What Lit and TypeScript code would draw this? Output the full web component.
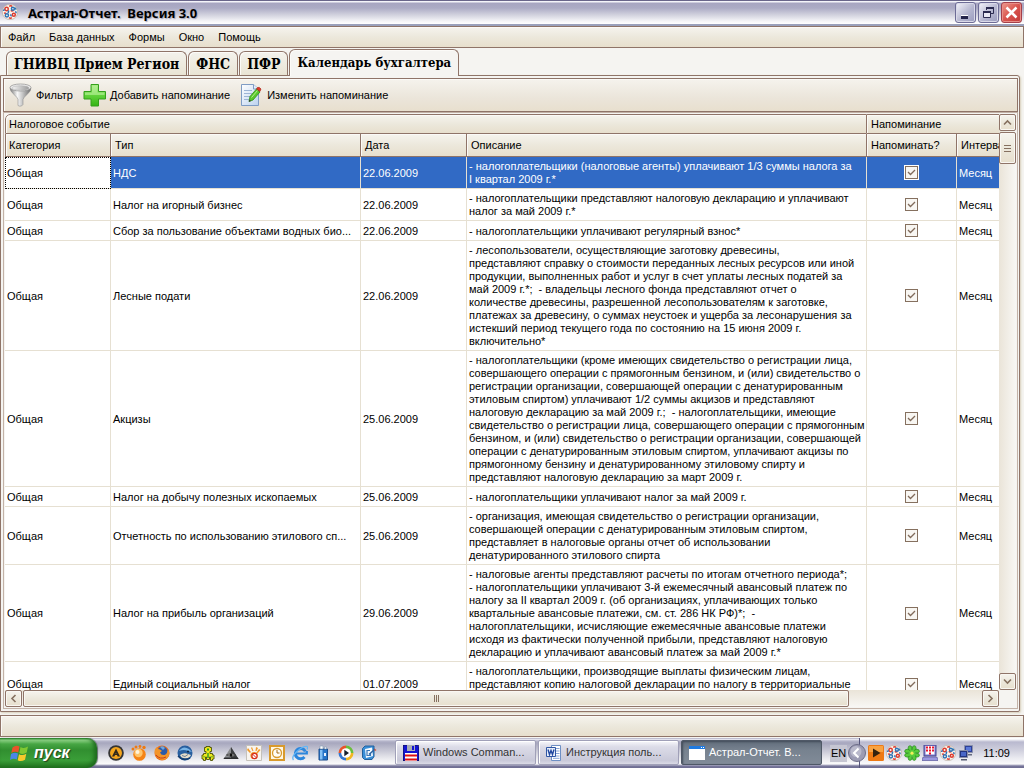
import { LitElement, html, css, svg, nothing } from "lit";
import { customElement, state } from "lit/decorators.js";
import { classMap } from "lit/directives/class-map.js";

interface TaxEvent {
  category: string;
  type: string;
  date: string;
  text: string;
  remind: boolean;
  interval: string;
}

const event = (type: string, date: string, ...lines: string[]): TaxEvent => ({
  category: "Общая", type, date, text: lines.join("\n"), remind: true, interval: "Месяц",
});

const EVENTS: TaxEvent[] = [
  event("НДС", "22.06.2009",
    "- налогоплательщики (налоговые агенты) уплачивают 1/3 суммы налога за",
    "I квартал 2009 г.*"),
  event("Налог на игорный бизнес", "22.06.2009",
    "- налогоплательщики представляют налоговую декларацию и уплачивают",
    "налог за май 2009 г.*"),
  event("Сбор за пользование объектами водных био...", "22.06.2009",
    "- налогоплательщики уплачивают регулярный взнос*"),
  event("Лесные подати", "22.06.2009",
    "- лесопользователи, осуществляющие заготовку древесины,",
    "представляют справку о стоимости переданных лесных ресурсов или иной",
    "продукции, выполненных работ и услуг в счет уплаты лесных податей за",
    "май 2009 г.*;  - владельцы лесного фонда представляют отчет о",
    "количестве древесины, разрешенной лесопользователям к заготовке,",
    "платежах за древесину, о суммах неустоек и ущерба за лесонарушения за",
    "истекший период текущего года по состоянию на 15 июня 2009 г.",
    "включительно*"),
  event("Акцизы", "25.06.2009",
    "- налогоплательщики (кроме имеющих свидетельство о регистрации лица,",
    "совершающего операции с прямогонным бензином, и (или) свидетельство о",
    "регистрации организации, совершающей операции с денатурированным",
    "этиловым спиртом) уплачивают 1/2 суммы акцизов и представляют",
    "налоговую декларацию за май 2009 г.;  - налогоплательщики, имеющие",
    "свидетельство о регистрации лица, совершающего операции с прямогонным",
    "бензином, и (или) свидетельство о регистрации организации, совершающей",
    "операции с денатурированным этиловым спиртом, уплачивают акцизы по",
    "прямогонному бензину и денатурированному этиловому спирту и",
    "представляют налоговую декларацию за март 2009 г."),
  event("Налог на добычу полезных ископаемых", "25.06.2009",
    "- налогоплательщики уплачивают налог за май 2009 г."),
  event("Отчетность по использованию этилового сп...", "25.06.2009",
    "- организация, имеющая свидетельство о регистрации организации,",
    "совершающей операции с денатурированным этиловым спиртом,",
    "представляет в налоговые органы отчет об использовании",
    "денатурированного этилового спирта"),
  event("Налог на прибыль организаций", "29.06.2009",
    "- налоговые агенты представляют расчеты по итогам отчетного периода*;",
    "- налогоплательщики уплачивают 3-й ежемесячный авансовый платеж по",
    "налогу за II квартал 2009 г. (об организациях, уплачивающих только",
    "квартальные авансовые платежи, см. ст. 286 НК РФ)*;  -",
    "налогоплательщики, исчисляющие ежемесячные авансовые платежи",
    "исходя из фактически полученной прибыли, представляют налоговую",
    "декларацию и уплачивают авансовый платеж за май 2009 г.*"),
  event("Единый социальный налог", "01.07.2009",
    "- налогоплательщики, производящие выплаты физическим лицам,",
    "представляют копию налоговой декларации по налогу в территориальные",
    "\u00a0"),
];

const icon = (size: number, body: unknown) =>
  html`<svg class="icon" width=${size} height=${size} viewBox="0 0 ${size} ${size}" aria-hidden="true">${body}</svg>`;

/* A cream disc ringed by red and blue curls. */
const astral = () => icon(16, svg`
  <circle cx="8" cy="8" r="7.700" fill="#fbf5ec" stroke="#b9aea4" stroke-width=".7"/>
  <g fill="none" stroke-width="1.500">
    <g stroke="#dc3c30">
      <circle cx="4.600" cy="5" r="1.700"/><circle cx="11.800" cy="10.800" r="1.500"/>
      <path d="M7.200 2.300q1.800-1 3 .2M2 9.300q1.200-.6 2 .4M7 13.700q1.500 1 2.800 0M8.800 7.200q1.400-1.200 2.600 0"/>
    </g>
    <g stroke="#2f74b6">
      <circle cx="10.900" cy="4.800" r="1.500"/><circle cx="4.900" cy="11.300" r="1.600"/>
      <path d="M1.600 7q.2-1.200 1-1.600M13.300 7.400q1 .6.8 1.800M7.200 6.600q-1.600 1-.6 2.600M8.300 10.500q1.200.6.600 1.800M12.800 4q1 .6 1.300 1.600"/>
    </g>
  </g>`);

const funnel = () => icon(24, svg`
  <defs>
    <linearGradient id="fun"><stop stop-color="#777"/><stop offset=".35" stop-color="#f8f8f8"/><stop offset=".6" stop-color="#c4c4c4"/><stop offset="1" stop-color="#6a6a6a"/></linearGradient>
    <linearGradient id="funIn"><stop stop-color="#f4f4f4"/><stop offset="1" stop-color="#9b9b9b"/></linearGradient>
  </defs>
  <path d="M1 5q0 3 4 6.500q3.500 3 4 5v6q1.500 1 3.500 0.500l1.500-1.500v-5q.5-2 4-5q4-3.500 4-6.500z" fill="url(#fun)" stroke="#909090" stroke-width=".6"/>
  <ellipse cx="11.500" cy="4.500" rx="10.500" ry="3.500" fill="#eee" stroke="#8c8c8c" stroke-width=".7"/>
  <ellipse cx="11.500" cy="5" rx="8.500" ry="2.300" fill="url(#funIn)" stroke="#aaa" stroke-width=".5"/>`);

const plus = () => icon(24, svg`
  <defs><linearGradient id="pl" x2="0" y2="1"><stop stop-color="#a4ea7e"/><stop offset=".5" stop-color="#62d23c"/><stop offset="1" stop-color="#35b414"/></linearGradient></defs>
  <path d="M8 1.500h7.500v7h7v7.500h-7v7H8v-7H1V8.500h7z" fill="url(#pl)" stroke="#34a01c"/>
  <path d="M9 2.500h5.500v7h7v2.500H2V9.500h7z" fill="#c3f5a6" opacity=".55"/>`);

const edit = () => icon(24, svg`
  <defs><linearGradient id="pg" x2="1" y2="1"><stop stop-color="#fdfeff"/><stop offset="1" stop-color="#bcd2ee"/></linearGradient></defs>
  <path d="M1.500 1.500h12l5 4.500v16.500h-17z" fill="url(#pg)" stroke="#7f9cc4"/>
  <path d="M13.500 1.500V6h5" fill="#e5eefa" stroke="#7f9cc4"/>
  <path d="M4 7.500h8M4 10.500h8M4 13.500h6M4 16.500h5" stroke="#9db5d6"/>
  <path d="M10 13.500l6.500-7.500 3.500 3-7 8-4 1.500z" fill="#58c72c" stroke="#2f8b14" stroke-width=".8"/>
  <path d="M11.500 14.500l6-7" stroke="#b5f08d"/>
  <path d="M16.500 6l1-1.500q2-1 3.500 1.500l-1 2.500z" fill="#e03a28" stroke="#a32016" stroke-width=".6"/>
  <path d="M8.800 18.700l.6-2 1.700 1.200z" fill="#333"/>`);

const flag = () => icon(20, svg`
  <path d="M2.500 4.500Q6 1.500 9.500 3.500L8.300 9.500Q5 7.800 1.300 10z" fill="#e8532a"/>
  <path d="M10.500 4Q14 6 18 3.500l-1.300 6Q13 12 9.300 10z" fill="#7fc832"/>
  <path d="M1 11Q4.500 9 8 10.500l-1.200 6Q3.500 14.800 0 17z" fill="#4a86e8"/>
  <path d="M9 11.200q3.500 2 7.300-.5l-1.300 6q-4 2.500-7.300.5z" fill="#f6c92c"/>`);

const avast = () => icon(16, svg`
  <circle cx="8" cy="8" r="7.800" fill="#343434"/><circle cx="8" cy="8" r="6" fill="#f4a51d"/>
  <path d="M8 3.500L4 11.500h2.300L8 8l1.700 3.500H12z" fill="#33291a"/><path d="M6.500 9.500h3" stroke="#33291a"/>`);

const comet = () => icon(16, svg`
  <circle cx="8.500" cy="9.500" r="6.300" fill="#f58316"/><circle cx="7.500" cy="8" r="4.200" fill="#ffc46a"/><circle cx="6.500" cy="7" r="2" fill="#fff3dc"/>
  <g fill="#ee7a12"><circle cx="2" cy="4" r="1.500"/><circle cx="5" cy="2" r="1.500"/><circle cx="9" cy="1.500" r="1.400"/><circle cx="13" cy="2.500" r="1.700"/></g>`);

const firefox = () => icon(16, svg`
  <circle cx="8" cy="8" r="7.500" fill="#e8701a"/><circle cx="8.500" cy="6.500" r="5" fill="#2c5ba8"/>
  <path d="M6 2q3-2 5 1l-2 2z" fill="#6fa6de"/>
  <path d="M1 4l2-2 1 2q2 0 4 2L6 7.500q1 3 4.500 2.500 3-1 3.500-6 3 5-.5 9-5 4-9.500 0T1 4z" fill="#f3952a"/>
  <path d="M2 10q4 5 10 2" stroke="#c8401a" fill="none"/>`);

const thunderbird = () => icon(16, svg`
  <circle cx="8" cy="8" r="7.500" fill="#285f9f"/>
  <path d="M2 6q4-6 10-2l3 3-4-1q-4-2-9 0z" fill="#78b5e8"/>
  <path d="M3 10q4-3 8-1l3 1q-2 4-6 3.500-4-.5-5-3.500z" fill="#e6dcc8"/>
  <path d="M5 10.500l3 1 3-2" fill="none" stroke="#6d8098"/><circle cx="11" cy="6.500" r="1" fill="#10243c"/>
  <path d="M1 11q5 5.500 12 2" stroke="#143d70" stroke-width="1.500" fill="none"/>`);

const qip = () => icon(16, svg`
  <path d="M6 1.500h4v1h1.500v4H10v2h2.500v1.500H14v4h-1.500v1.500h-2V12H9.500v2.500h-3V12h-1v3.500h-2V14H2v-4h1.500V8.500H6v-2H4.500v-4H6z" fill="#f0e81e" stroke="#4b5208" stroke-width=".9"/>
  <path d="M7 3.500h2v2H7zM7.300 8h1.400v5H7.300zM3.500 11h1v1.500h-1zM11.500 11h1v1.500h-1z" fill="#2a9c24"/>`);

const pyramid = () => icon(16, svg`
  <path d="M8 2L15.500 14H.5z" fill="#8b8d90"/><path d="M8 2L15.500 14H8z" fill="#3c3e41"/><path d="M1.500 12.500h13l1 1.500H.5z" fill="#2b2c2e"/>
  <path d="M3.500 10q4.500-3 9 0-4.500 3-9 0z" fill="#ddd" stroke="#222" stroke-width=".7"/><circle cx="8" cy="10" r="1.500" fill="#111"/>`);

const paw = () => icon(16, svg`
  <path d="M.5.500h15v15H.5z" fill="#f7f4ef" stroke="#c5c1ba"/>
  <g fill="#f29a2b"><circle cx="8" cy="10.500" r="3.600"/><path d="M2 3l3 4-1 1-3-3zM6 2l1.500 4h-1L5 3zM10 2l-.5 4h1L12 3zM14.500 5L11 9l-1-1 3-4z"/></g>
  <circle cx="8.500" cy="11" r="2.600" fill="#fff" stroke="#d92a1c" stroke-width="1.200"/><path d="M6.800 9.300l3.400 3.400" stroke="#d92a1c"/>`);

const clockBox = () => icon(16, svg`
  <path d="M1 1h14v14H1z" fill="#fff7e2" stroke="#d99a2c" stroke-width="2"/>
  <circle cx="8" cy="8" r="4.500" fill="#fffdf6" stroke="#d99a2c" stroke-width="1.300"/><path d="M8 5v3h2.500" fill="none" stroke="#a56a12"/>`);

const explorer = () => icon(16, svg`
  <path d="M13.300 6.500A5.200 5.200 0 1 0 12.500 12" fill="none" stroke="#2c86dc" stroke-width="3"/>
  <path d="M4 8.500h10.800V6" fill="none" stroke="#2c86dc" stroke-width="2.200"/>
  <path d="M1.500 15Q-1 12 5 6.500T15 1.500q1.300 1-.2 3" fill="none" stroke="#66b6f4" stroke-width="1.300"/>`);

const bin = () => icon(16, svg`
  <path d="M4 4h8.500v11H4z" fill="#2875c8" stroke="#184c8c"/><path d="M5 5h2.500v9.500H5z" fill="#84c0f4"/>
  <path d="M5 1h3v3H5zM9.500 2h2v2h-2z" fill="#fff" stroke="#8297b0" stroke-width=".6"/><path d="M9 8h2v3H9z" fill="#e9f3ff"/>`);

const player = () => icon(16, svg`
  <path d="M8 8V.5A7.500 7.500 0 0 0 .5 8z" fill="#e9542a"/><path d="M8 8h7.500A7.500 7.500 0 0 0 8 .5z" fill="#6abf3a"/>
  <path d="M8 8v7.500A7.500 7.500 0 0 0 15.500 8z" fill="#f2b722"/><path d="M8 8H.5A7.500 7.500 0 0 0 8 15.500z" fill="#3578d2"/>
  <circle cx="8" cy="8" r="4.800" fill="#fff"/><path d="M6.300 4.800v6.400L11 8z" fill="#17212e"/>`);

const desktop = () => icon(16, svg`
  <path d="M1.500 3.500L4 1h9v10.500l-2 3H3.500l-2-2z" fill="#3a8fd8" stroke="#22609c"/>
  <path d="M4 4l7-1.500 1 8.500-7 2z" fill="#f4faff"/><path d="M9 5.500H6v5h3.500V8" fill="none" stroke="#3a78b8" stroke-width="1.200"/>
  <path d="M8 9.500L14 4" stroke="#2a62a0" stroke-width="1.500"/><path d="M13 3.500l2.500 1.500-1.500 1z" fill="#e2502a"/>`);

const floppy = () => icon(16, svg`
  <path d="M0 0h14.500L16 1.500V16H0z" fill="#1414d2"/><path d="M0 0h16v16H0z" fill="none" stroke="#10104a"/>
  <path d="M4 0h8v6H4z" fill="#a9adb5"/><path d="M9 1h2v4H9z" fill="#1414d2"/>
  <path d="M2 8h12v8H2z" fill="#fff"/><path d="M2 9.500h12v2H2zM2 13.500h12v2H2z" fill="#e01010"/>`);

const word = () => icon(16, svg`
  <path d="M5.500.500h9v15h-9z" fill="#fff" stroke="#6d8fc4"/><path d="M10 3.500h3.500M10 6h3.500M10 8.500h3.500M7 11h6.500M7 13.300h6.500" stroke="#86a4d6"/>
  <path d="M.5 2.500h9v9h-9z" fill="#e8effb" stroke="#2f56a4"/><path d="M2 4.500l1.500 5L5 5.500l1.500 4L8 4.500" fill="none" stroke="#2148a0" stroke-width="1.400"/>`);

const windowIcon = () => icon(16, svg`<path d="M0 1h16v14H0z" fill="#fff"/><path d="M0 1h16v3H0z" fill="#1f7ae0"/><path d="M12 2h1v1h-1zM14 2h1v1h-1z" fill="#fff"/>`);

const orangePlay = () => icon(16, svg`<rect width="16" height="16" rx="1.500" fill="#ee7a14"/><path d="M1 1h14v6H1z" fill="#f9a342"/><path d="M5 3.500v9L12.500 8z" fill="#33220f"/>`);

const clover = () => icon(16, svg`
  <g fill="#58cc3c" stroke="#23881a" stroke-width=".7">
    <ellipse cx="6" cy="3.300" rx="1.900" ry="2.600"/><ellipse cx="10.200" cy="3.300" rx="1.900" ry="2.600"/>
    <ellipse cx="12.800" cy="6.200" rx="2.600" ry="1.900"/><ellipse cx="12.800" cy="10.200" rx="2.600" ry="1.900"/>
    <ellipse cx="10.200" cy="12.800" rx="1.900" ry="2.600"/><ellipse cx="6" cy="12.800" rx="1.900" ry="2.600"/>
    <ellipse cx="3.300" cy="10.200" rx="2.600" ry="1.900"/><ellipse cx="3.300" cy="6.200" rx="2.600" ry="1.900"/>
  </g>
  <circle cx="8" cy="8.200" r="3.500" fill="#58cc3c"/><circle cx="8" cy="8.200" r="1.600" fill="#f4ee5a"/>`);

const keypad = () => icon(16, svg`
  <path d="M2 0h12v11H2z" fill="#7d7bd0" stroke="#4a4890"/><path d="M3.500 1h9v8.500h-9z" fill="#fff"/>
  <path d="M4 1.500h2v2H4zM7 1.500h2v2H7zM10 1.500h2v2h-2zM4 4.500h2v2H4zM7 4.500h2v2H7zM10 4.500h2v2h-2zM7 7.500h2v2H7z" fill="#e8142c"/>
  <path d="M1 12h14l1 3.500H0z" fill="#9a98e0" stroke="#4a4890" stroke-width=".6"/>`);

const network = () => icon(16, svg`
  <path d="M6.500.500h8v7h-8z" fill="#2d3f9a" stroke="#8a90a8"/><path d="M8 2h5v4H8z" fill="#5a78d8"/><path d="M9 9h5v1.500H9z" fill="#666c80"/>
  <path d="M1.500 5.500h8v7h-8z" fill="#23347f" stroke="#8a90a8"/><path d="M3 7h5v4H3z" fill="#4967c8"/><path d="M3 14h6v1.500H3z" fill="#555b70"/>`);

const chevron = (d: string, width = 1.6) => html`<svg width="9" height="9" viewBox="0 0 9 9" aria-hidden="true"><path d=${d} fill="none" stroke="#85705f" stroke-width=${width}/></svg>`;

const TABS = ["ГНИВЦ Прием Регион", "ФНС", "ПФР", "Календарь бухгалтера"];
const QUICK: [string, () => unknown][] = [
  ["Антивирус", avast], ["Почта", comet], ["Firefox", firefox], ["Thunderbird", thunderbird],
  ["QIP", qip], ["Пирамида", pyramid], ["ICQ", paw], ["Органайзер", clockBox],
  ["Internet Explorer", explorer], ["Корзина", bin], ["Проигрыватель", player], ["Рабочий стол", desktop],
];

@customElement("app-root")
export class AppRoot extends LitElement {
  @state() private tab = 3;
  @state() private selected = 0;

  static styles = css`
    :host {
      --line: #8f7468;
      --grid: #e6e0d2;
      --face: linear-gradient(#f6f4ee, #ece8dc 50%, #e7dfcd);
      display: flex;
      flex-direction: column;
      height: 100vh;
      overflow: hidden;
      background: #f5f4f1;
      color: #000;
      font: 11px/13px "Liberation Sans", Arial, sans-serif;
      cursor: default;
    }
    * { box-sizing: border-box; }
    button { font: inherit; color: inherit; margin: 0; padding: 0; border: 0; background: none; }
    svg { display: block; flex: none; }

    .title {
      display: flex; align-items: center; height: 26px; flex: none; padding: 0 2px;
      border-top: 1px solid #69658a; border-bottom: 2px solid #9aa0bb;
      background: linear-gradient(#f4f4fa 0, #f4f4fa 1px, #a7a5c1 2px, #acabc5 7px, #d2d2de 14px, #f4f4f7 20px, #fff 23px);
    }
    .title h1 {
      flex: 1; margin: 0 0 0 10px; font: bold 13px/20px "Noto Sans", sans-serif; white-space: pre;
      text-shadow: 1px 1px 1px #a9a8bb;
    }
    .title .icon { align-self: flex-start; margin-top: 3px; }
    .winbuttons { display: flex; gap: 2px; }
    .win {
      display: grid; place-items: center; width: 21px; height: 21px; border: 1px solid #6d6c96; border-radius: 3px;
      background: linear-gradient(135deg, #f4f4fb, #b6b7d0 55%, #9a9cbe); box-shadow: inset 0 0 0 1px #d9d9e8;
    }
    .win .icon { margin: 0; align-self: center; }
    .win.close { border-color: #a5404a; background: linear-gradient(135deg, #ee9a8d, #d9544e 50%, #c23a3a); box-shadow: inset 0 0 0 1px #e88e88; }

    .menu {
      display: flex; flex: none; height: 22px; padding-left: 7px; gap: 14px; align-items: center;
      border: 1px solid var(--line); background: var(--face); box-shadow: inset 1px 1px #fbfaf7;
    }

    .tabs { display: flex; flex: none; align-items: flex-end; height: 27px; padding-left: 6px; gap: 1px; }
    .tab {
      height: 24px; padding: 0 7px; border: 1px solid var(--line); border-bottom: 0; border-radius: 6px 6px 0 0;
      background: linear-gradient(#f4f2ec, #e9e4d5); box-shadow: inset 1px 1px #fcfbf8;
      font: bold 14px/24px "DejaVu Serif Condensed", "DejaVu Serif", serif; white-space: nowrap;
    }
    .tab.active {
      height: 27px; background: #f5f4f1; font-size: 13px;
      position: relative; z-index: 1; margin-bottom: -1px;
    }

    .page {
      flex: 1; min-height: 0; display: flex; flex-direction: column; margin-right: 4px; padding: 2px 1px 2px 2px;
      border: 1px solid var(--line); border-radius: 0 3px 2px 0; box-shadow: 1px 1px 2px #d8d0bc;
    }
    .toolbar {
      display: flex; flex: none; align-items: center; height: 34px; padding-left: 5px; gap: 10px;
      border: 1px solid var(--line); background: linear-gradient(#f5f3ed, #ebe5da 60%, #e8dfce); box-shadow: inset 1px 1px #fbfaf7;
    }
    .tool { display: flex; align-items: center; gap: 3px; white-space: nowrap; }

    .gridbox {
      flex: 1; min-height: 0; display: grid; grid-template: minmax(0, 1fr) 17px / minmax(0, 1fr) 17px; padding: 1px;
      border: 1px solid #c3b2a7; 
    }
    .view { overflow: hidden; background: #fff; border-radius: 5px 0 0 0; }
    table { width: 100%; min-width: 1146px; table-layout: fixed; border-collapse: separate; border-spacing: 0; }
    .c1 { width: 106px; } .c2 { width: 250px; } .c3 { width: 106px; } .c4 { width: 400px; } .c5 { width: 90px; }
    th {
      height: 23px; padding: 0 4px; text-align: left; font-weight: normal; background: var(--face);
      border-right: 1px solid var(--line); border-bottom: 1px solid var(--line); box-shadow: inset 1px 1px #fbfaf7;
    }
    .group th { height: 20px; border-top: 1px solid var(--line); }
    th:first-child { border-left: 1px solid var(--line); padding-left: 3px; }
    .group th:first-child { border-top-left-radius: 5px; }
    td {
      height: 20px; padding: 3px 2px 2px; border-right: 1px solid var(--grid); border-bottom: 1px solid var(--grid);
      vertical-align: middle; white-space: pre;
    }
    .selected td { background: #316ac5; color: #fff; }
    .selected td:first-child { background: #fff; color: #000; outline: 1px dotted #000; outline-offset: -1px; }
    .mark { padding: 0; }
    input {
      appearance: none; display: block; width: 13px; height: 13px; margin: 0 auto; border: 1px solid #85705f;
      background: #f8f6f2;
    }
    input:checked {
      background: #f8f6f2 url("data:image/svg+xml,%3Csvg xmlns='http://www.w3.org/2000/svg' width='11' height='11'%3E%3Cpath d='M2 5l2.500 2.500 4.500-4.500' fill='none' stroke='%23806a5a' stroke-width='1.300'/%3E%3C/svg%3E") center no-repeat;
    }
    .selected input { outline: 1px solid #fff; }

    .bar { display: flex; gap: 1px; background: linear-gradient(90deg, #eae4d8, #f8f7f4); }
    .vbar { flex-direction: column; }
    .hbar { background: linear-gradient(#eae4d8, #f8f7f4); }
    .arrow, .thumb {
      display: grid; place-items: center; flex: none; border: 1px solid var(--line); border-radius: 2px;
      background: var(--face); box-shadow: inset 0 0 0 1px #f9f7f2;
    }
    .arrow { width: 17px; height: 17px; }
    .vthumb { width: 17px; height: 32px; }
    .hthumb { flex: 0 1 826px; height: 17px; }
    .rest { flex: 1; }

    .status { flex: none; height: 22px; margin: 3px 0 1px; border: 1px solid var(--line); background: var(--face); box-shadow: inset 1px 1px #fbfaf7; }

    .taskbar {
      display: flex; flex: none; align-items: stretch; height: 30px; color: #333;
      background: linear-gradient(#8a89a8 0, #f2f2f8 1px, #b7b7cc 3px, #a7a7be 5px, #c9c9d6 13px, #ececf0 21px, #fafafb 26px, #77769b 28px, #6d6c90);
    }
    .start {
      display: flex; align-items: center; gap: 4px; width: 97px; padding-left: 10px; border-radius: 0 10px 10px 0;
      color: #fff; font: italic bold 16px/26px "Liberation Sans", sans-serif; text-shadow: 1px 1px 1px #22401c;
      background: linear-gradient(#1e7f22 0, #8fd387 2px, #47a644 6px, #318f30 12px, #3a9e38 22px, #23761f);
      box-shadow: inset -3px -1px 4px #1c6a1c, 1px 0 1px #5c6b66;
    }
    .quick { display: flex; align-items: center; gap: 7px; margin-left: 11px; width: 287px; }
    .quick button, .traybar button { display: block; }
    .tasks { display: flex; flex: 1; min-width: 0; gap: 2px; padding: 2px 0 3px; }
    .task {
      display: flex; align-items: center; flex: 0 1 141px; min-width: 0; gap: 4px; padding: 0 7px; white-space: nowrap;
      border: 1px solid #a0a0b8; border-radius: 2px; box-shadow: inset 1px 1px #fff;
      background: linear-gradient(#f8f8fb, #dcdce8 25%, #c9c9d9 85%, #dadae6);
    }
    .task.on { color: #fff; border-color: #4f5866; background: linear-gradient(#626d7c, #77828f 40%, #818b98); box-shadow: inset 1px 1px 2px #434c5a; }
    .lang { align-self: center; padding: 2px 1px; margin-right: 12px; background: #c6c6d2; color: #000; }
    .traybar {
      display: flex; align-items: center; gap: 2px; padding-right: 14px; border-left: 1px solid #55557a; color: #000;
      background: linear-gradient(#fdfdff 0, #fff 1px, #b9b9cf 4px, #cfcfdd 12px, #ededf2 21px, #fafafb 26px, #77769b 28px, #6d6c90);
    }
    .hide { position: relative; margin-left: -12px; }
    time { margin-left: 7px; }
  `;

  render() {
    return html`
      <header class="title">
        ${astral()}
        <h1>Астрал-Отчет.  Версия 3.0</h1>
        <div class="winbuttons">
          <button class="win" aria-label="Свернуть">${icon(17, svg`<path d="M4 12h7v3H4z" fill="#23234a"/><path d="M4 11h7v1H4z" fill="#fff"/>`)}</button>
          <button class="win" aria-label="Восстановить">${icon(17, svg`<path d="M6.500 6V3.500h7v6H11" fill="none" stroke="#2b2b50"/><path d="M6 3h8v2H6z" fill="#2b2b50"/><path d="M3.500 7.500h7v6h-7z" fill="#e9e9f4" stroke="#2b2b50"/><path d="M3 7h8v2H3z" fill="#2b2b50"/>`)}</button>
          <button class="win close" aria-label="Закрыть">${icon(17, svg`<path d="M3.500 3.500l10 10M13.500 3.500l-10 10" stroke="#fff" stroke-width="2.500"/>`)}</button>
        </div>
      </header>

      <nav class="menu">
        ${["Файл", "База данных", "Формы", "Окно", "Помощь"].map((m) => html`<button>${m}</button>`)}
      </nav>

      <div class="tabs" role="tablist">
        ${TABS.map((t, i) => html`
          <button role="tab" aria-selected=${i === this.tab} class=${classMap({ tab: true, active: i === this.tab })}
            @click=${() => (this.tab = i)}>${t}</button>`)}
      </div>

      <main class="page">
        <div class="toolbar" role="toolbar">
          <button class="tool">${funnel()}Фильтр</button>
          <button class="tool">${plus()}Добавить напоминание</button>
          <button class="tool">${edit()}Изменить напоминание</button>
        </div>
        <section class="gridbox">
          <div class="view">${this.renderTable()}</div>
          <div class="bar vbar">
            <button class="arrow" aria-label="Вверх">${chevron("M1 6.500L4.500 3 8 6.500")}</button>
            <div class="thumb vthumb">${chevron("M1 1.500h7M1 4.500h7M1 7.500h7", 1)}</div>
            <div class="rest"></div>
            <button class="arrow" aria-label="Вниз">${chevron("M1 2.500L4.500 6 8 2.500")}</button>
          </div>
          <div class="bar hbar">
            <button class="arrow" aria-label="Влево">${chevron("M6.500 1L3 4.500 6.500 8")}</button>
            <div class="thumb hthumb">${chevron("M2.500 1v7M4.500 1v7M6.500 1v7", 1)}</div>
            <div class="rest"></div>
            <button class="arrow" aria-label="Вправо">${chevron("M2.500 1L6 4.500 2.500 8")}</button>
          </div>
        </section>
      </main>

      <footer class="status"></footer>
      ${this.renderTaskbar()}
    `;
  }

  private renderTable() {
    return html`
      <table>
        <colgroup><col class="c1"><col class="c2"><col class="c3"><col class="c4"><col class="c5"><col></colgroup>
        <thead>
          <tr class="group"><th colspan="4">Налоговое событие</th><th colspan="2">Напоминание</th></tr>
          <tr><th>Категория</th><th>Тип</th><th>Дата</th><th>Описание</th><th>Напоминать?</th><th>Интервал</th></tr>
        </thead>
        <tbody>
          ${EVENTS.map((e, i) => html`
            <tr class=${i === this.selected ? "selected" : nothing} @click=${() => (this.selected = i)}>
              <td>${e.category}</td><td>${e.type}</td><td>${e.date}</td><td>${e.text}</td>
              <td class="mark"><input type="checkbox" aria-label="Напоминать: ${e.type}" .checked=${e.remind}></td>
              <td>${e.interval}</td>
            </tr>`)}
        </tbody>
      </table>`;
  }

  private renderTaskbar() {
    return html`
      <footer class="taskbar">
        <button class="start">${flag()}пуск</button>
        <div class="quick">${QUICK.map(([label, draw]) => html`<button aria-label=${label}>${draw()}</button>`)}</div>
        <div class="tasks">
          <button class="task">${floppy()}Windows Comman...</button>
          <button class="task">${word()}Инструкция поль...</button>
          <button class="task on">${windowIcon()}Астрал-Отчет.  В...</button>
        </div>
        <span class="lang">EN</span>
        <div class="traybar">
          <button class="hide" aria-label="Скрыть значки">${icon(18, svg`
            <circle cx="9" cy="9" r="8.500" fill="#9c9cb4" stroke="#6d6d88"/><circle cx="8" cy="7.500" r="5.500" fill="#b9b9cb"/>
            <path d="M10.500 4.500L6 9l4.500 4.500" fill="none" stroke="#fff" stroke-width="2"/>`)}</button>
          ${[orangePlay, astral, clover, keypad, astral, network].map((draw) => draw())}
          <time>11:09</time>
        </div>
      </footer>`;
  }
}
